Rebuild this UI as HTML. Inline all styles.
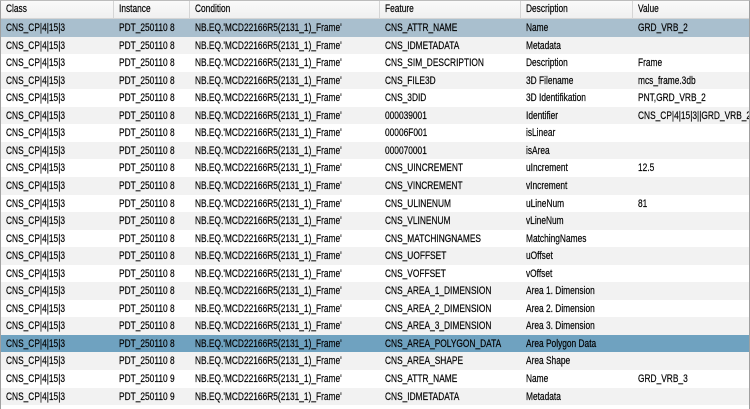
<!DOCTYPE html>
<html><head><meta charset="utf-8"><style>
*{margin:0;padding:0;box-sizing:border-box}
body{width:750px;height:409px;overflow:hidden;background:#fff;font-family:"Liberation Sans",sans-serif;font-size:11px;color:#000;position:relative}
.frame{position:absolute;left:0;top:0;width:750px;height:409px;border-left:1px solid #a0a0a0;border-right:1px solid #a0a0a0;border-top:1px solid #bcbcbc}
.hdr{position:absolute;top:1px;left:1px;right:1px;height:18px;background:linear-gradient(#fafafa,#f0f0f0);border-bottom:1px solid #d5d5d5}
.hdr div{position:absolute;top:0;height:17px;line-height:17px;padding-left:5px;border-right:1px solid #d5d5d5}
.hdr span,.row span{display:inline-block;transform:scaleX(0.76);transform-origin:left center;white-space:nowrap;-webkit-text-stroke:0.2px #000}
.row{position:absolute;left:1px;right:1px;height:17.6px;line-height:18px;overflow:hidden}
.row div{position:absolute;top:0;padding-left:5px;white-space:nowrap}
.g{background:#f2f2f2}.s1{background:#a9bfce}.s2{background:#6fa2c0}
</style></head><body>
<div class="hdr">
<div style="left:0;width:113px"><span>Class</span></div>
<div style="left:113px;width:76px"><span>Instance</span></div>
<div style="left:189px;width:190px"><span>Condition</span></div>
<div style="left:379px;width:141px"><span>Feature</span></div>
<div style="left:520px;width:112px"><span>Description</span></div>
<div style="left:632px;width:117px;border-right:none"><span>Value</span></div>
</div>
<div id="rows"></div>
<div class="frame"></div>
<script>
var d=[
["8","CNS_ATTR_NAME","Name","GRD_VRB_2"],
["8","CNS_IDMETADATA","Metadata",""],
["8","CNS_SIM_DESCRIPTION","Description","Frame"],
["8","CNS_FILE3D","3D Filename","mcs_frame.3db"],
["8","CNS_3DID","3D Identifikation","PNT,GRD_VRB_2"],
["8","000039001","Identifier","CNS_CP|4|15|3||GRD_VRB_2"],
["8","00006F001","isLinear",""],
["8","000070001","isArea",""],
["8","CNS_UINCREMENT","uIncrement","12.5"],
["8","CNS_VINCREMENT","vIncrement",""],
["8","CNS_ULINENUM","uLineNum","81"],
["8","CNS_VLINENUM","vLineNum",""],
["8","CNS_MATCHINGNAMES","MatchingNames",""],
["8","CNS_UOFFSET","uOffset",""],
["8","CNS_VOFFSET","vOffset",""],
["8","CNS_AREA_1_DIMENSION","Area 1. Dimension",""],
["8","CNS_AREA_2_DIMENSION","Area 2. Dimension",""],
["8","CNS_AREA_3_DIMENSION","Area 3. Dimension",""],
["8","CNS_AREA_POLYGON_DATA","Area Polygon Data",""],
["8","CNS_AREA_SHAPE","Area Shape",""],
["9","CNS_ATTR_NAME","Name","GRD_VRB_3"],
["9","CNS_IDMETADATA","Metadata",""]];
var h="";
for(var i=0;i<d.length;i++){var r=d[i];var n=i+1;
var c=n==1?"s1":n==19?"s2":(n%2==0?"g":"");
h+='<div class="row '+c+'" style="top:'+(19+i*17.55)+'px"><div style="left:0"><span>CNS_CP|4|15|3</span></div><div style="left:113px"><span>PDT_250110 '+r[0]+'</span></div><div style="left:189px"><span>NB.EQ.\'MCD22166R5(2131_1)_Frame\'</span></div><div style="left:379px"><span>'+r[1]+'</span></div><div style="left:520px"><span>'+r[2]+'</span></div><div style="left:632px"><span>'+r[3]+'</span></div></div>';}
document.getElementById("rows").innerHTML=h;
</script>
</body></html>
